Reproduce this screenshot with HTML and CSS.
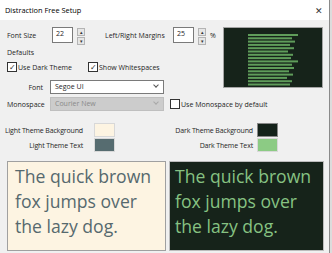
FILE: index.html
```html
<!DOCTYPE html>
<html lang="en">
<head>
    <meta charset="UTF-8">
    <title>Distraction Free Setup</title>
    <link rel="stylesheet" href="styles.css">
</head>
<body>
    <div class="window">
        <div class="titlebar">
            <span class="title">Distraction Free Setup</span>
            <span class="close">&#x2715;</span>
        </div>

        <div class="content">
            <div class="top">
                <div class="left">
                    <div class="row row-sizes">
                        <span class="label label-size">Font Size</span>
                        <span class="num">22</span>
                        <span class="spin"><i>&#9652;</i><i>&#9662;</i></span>
                        <span class="label label-margins">Left/Right Margins</span>
                        <span class="num">25</span>
                        <span class="spin"><i>&#9652;</i><i>&#9662;</i></span>
                        <span class="label">%</span>
                    </div>

                    <div class="defaults">Defaults</div>

                    <div class="row row-checks">
                        <label class="check checked">Use Dark Theme</label>
                        <label class="check checked check-ws">Show Whitespaces</label>
                    </div>

                    <div class="row row-font">
                        <span class="label field-label">Font</span>
                        <span class="select">Segoe UI</span>
                    </div>
                </div>

                <div class="mini">
                    <svg width="98" height="59" viewBox="0 0 98 59">
                        <g fill="#5f9c5a">
                            <rect x="24" y="6" width="50" height="2"/>
                            <rect x="24" y="9.3" width="44" height="2"/>
                            <rect x="24" y="12.6" width="47" height="2"/>
                            <rect x="24" y="15.9" width="42" height="2"/>
                            <rect x="24" y="19.2" width="46" height="2"/>
                            <rect x="24" y="22.5" width="40" height="2"/>
                            <rect x="24" y="25.8" width="45" height="2"/>
                            <rect x="24" y="29.1" width="43" height="2"/>
                            <rect x="24" y="32.4" width="50" height="2"/>
                            <rect x="24" y="35.7" width="44" height="2"/>
                            <rect x="24" y="39" width="46" height="2"/>
                            <rect x="24" y="42.3" width="41" height="2"/>
                            <rect x="24" y="45.6" width="45" height="2"/>
                            <rect x="24" y="48.9" width="39" height="2"/>
                            <rect x="24" y="52.2" width="44" height="2"/>
                            <rect x="24" y="55.5" width="42" height="2"/>
                        </g>
                    </svg>
                </div>
            </div>

            <div class="row row-mono">
                <span class="label field-label mono-label">Monospace</span>
                <span class="select disabled">Courier New</span>
                <label class="check check-mono">Use Monospace by default</label>
            </div>

            <div class="colors">
                <div class="color-col">
                    <div class="color-row">
                        <span class="label">Light Theme Background</span>
                        <span class="swatch light-bg"></span>
                    </div>
                    <div class="color-row">
                        <span class="label">Light Theme Text</span>
                        <span class="swatch light-text"></span>
                    </div>
                </div>
                <div class="color-col color-col-dark">
                    <div class="color-row">
                        <span class="label">Dark Theme Background</span>
                        <span class="swatch dark-bg"></span>
                    </div>
                    <div class="color-row">
                        <span class="label">Dark Theme Text</span>
                        <span class="swatch dark-text"></span>
                    </div>
                </div>
            </div>

            <div class="previews">
                <div class="preview preview-light">The quick brown fox jumps over the lazy dog.</div>
                <div class="preview preview-dark">The quick brown fox jumps over the lazy dog.</div>
            </div>
        </div>
    </div>
</body>
</html>
```

FILE: styles.css
```css
/* Окно настроек */
html, body {
    margin: 0;
    padding: 0;
    height: 100%;
}

body {
    background: #dcdcdc;
    font-family: 'Open Sans', sans-serif;
    font-size: 7px;
    color: #1e1e1e;
}

.window {
    width: 329px;
    height: 253px;
    background: #f0f0f0;
    border-right: 1px solid #8a8a8a;
    overflow: hidden;
}

.titlebar {
    height: 20px;
    background: #fff;
    display: flex;
    align-items: center;
    justify-content: space-between;
    padding: 0 6px 0 5px;
}

.title {
    font-size: 7.4px;
    color: #000;
}

.close {
    font-size: 9px;
    color: #333;
}

.content {
    padding: 7px 0 0 7px;
}

.top {
    display: flex;
}

.left {
    width: 216px;
}

.row {
    display: flex;
    align-items: center;
}

.label {
    white-space: nowrap;
    flex-shrink: 0;
}

/* Поля с числами */
.row-sizes {
    height: 16px;
}

.label-size {
    width: 45px;
}

.label-margins {
    margin-left: 16px;
    width: 68px;
}

.num {
    width: 16px;
    height: 14px;
    border: 1px solid #7a7a7a;
    background: #fff;
    padding-left: 3px;
    box-sizing: content-box;
    line-height: 12px;
    flex-shrink: 0;
}

.spin {
    margin: 0 4px;
    width: 8px;
    height: 14px;
    display: flex;
    flex-direction: column;
    gap: 1px;
    flex-shrink: 0;
}

.spin i {
    flex: 1;
    font-style: normal;
    font-size: 5px;
    line-height: 6px;
    text-align: center;
    background: #e6e6e6;
    border: 1px solid #b4b4b4;
    color: #333;
}

.defaults {
    margin-top: 3px;
    height: 13px;
    line-height: 13px;
}

.row-checks {
    margin-top: 2px;
    height: 12px;
}

.check {
    display: flex;
    align-items: center;
    white-space: nowrap;
}

.check::before {
    content: '';
    width: 8px;
    height: 8px;
    border: 1px solid #333;
    background: #fff;
    margin-right: 1px;
}

.check.checked::before {
    content: '\2713';
    font-size: 8px;
    line-height: 8px;
    text-align: center;
    color: #333;
}

.check-ws {
    margin-left: 16px;
}

.row-font {
    margin-top: 7px;
    height: 14px;
}

.field-label {
    width: 36px;
    text-align: right;
    margin-right: 7px;
}

.select {
    width: 108px;
    height: 12px;
    border: 1px solid #7a7a7a;
    background: #fff;
    padding-left: 4px;
    line-height: 12px;
    position: relative;
}

.select::after {
    content: '';
    position: absolute;
    right: 5px;
    top: 2px;
    width: 3px;
    height: 3px;
    border-right: 1px solid #555;
    border-bottom: 1px solid #555;
    transform: rotate(45deg);
}

.select.disabled {
    background: #cccccc;
    border-color: #bfbfbf;
    color: #8a8a8a;
}

.select.disabled::after {
    border-color: #a8a8a8;
}

/* Маленькое превью */
.mini {
    width: 98px;
    height: 59px;
    border: 1px solid #a5a5a5;
    background: #16231a;
    overflow: hidden;
}

.mini svg {
    display: block;
}

.row-mono {
    margin-top: 3px;
    height: 14px;
}

.mono-label {
    text-align: left;
    width: 43px;
    margin-right: 0;
}

.check-mono {
    margin-left: 6px;
}

/* Цвета тем */
.colors {
    display: flex;
    margin-top: 12px;
}

.color-col {
    width: 108px;
    display: flex;
    flex-direction: column;
    gap: 1px;
}

.color-col-dark {
    width: 163px;
}

.color-row {
    display: flex;
    justify-content: flex-end;
    align-items: center;
    gap: 11px;
    height: 14px;
    letter-spacing: -0.15px;
}

.color-col-dark .color-row {
    gap: 4px;
}

.swatch {
    width: 19px;
    height: 12px;
    border: 1px solid #d8d8d8;
    flex-shrink: 0;
}

.light-bg { background: #fdf4e2; }
.light-text { background: #566c70; }
.dark-bg { background: #14221a; border-color: #888; }
.dark-text { background: #8ccb84; }

/* Большие превью */
.previews {
    display: flex;
    gap: 3px;
    margin-top: 9px;
}

.preview {
    height: 90px;
    box-sizing: border-box;
    font-family: 'Open Sans', sans-serif;
    font-size: 17.6px;
    line-height: 25px;
    padding-top: 2px;
    overflow: hidden;
    flex-shrink: 0;
}

.preview-light {
    width: 159px;
    background: #fdf4e2;
    color: #56696e;
    border: 1px solid #a0a0a0;
    padding-left: 7px;
    padding-right: 4px;
}

.preview-dark {
    width: 155px;
    background: #16231a;
    color: #86c282;
    border: 1px solid #bcbcbc;
    padding-left: 5px;
    padding-right: 2px;
}
```
